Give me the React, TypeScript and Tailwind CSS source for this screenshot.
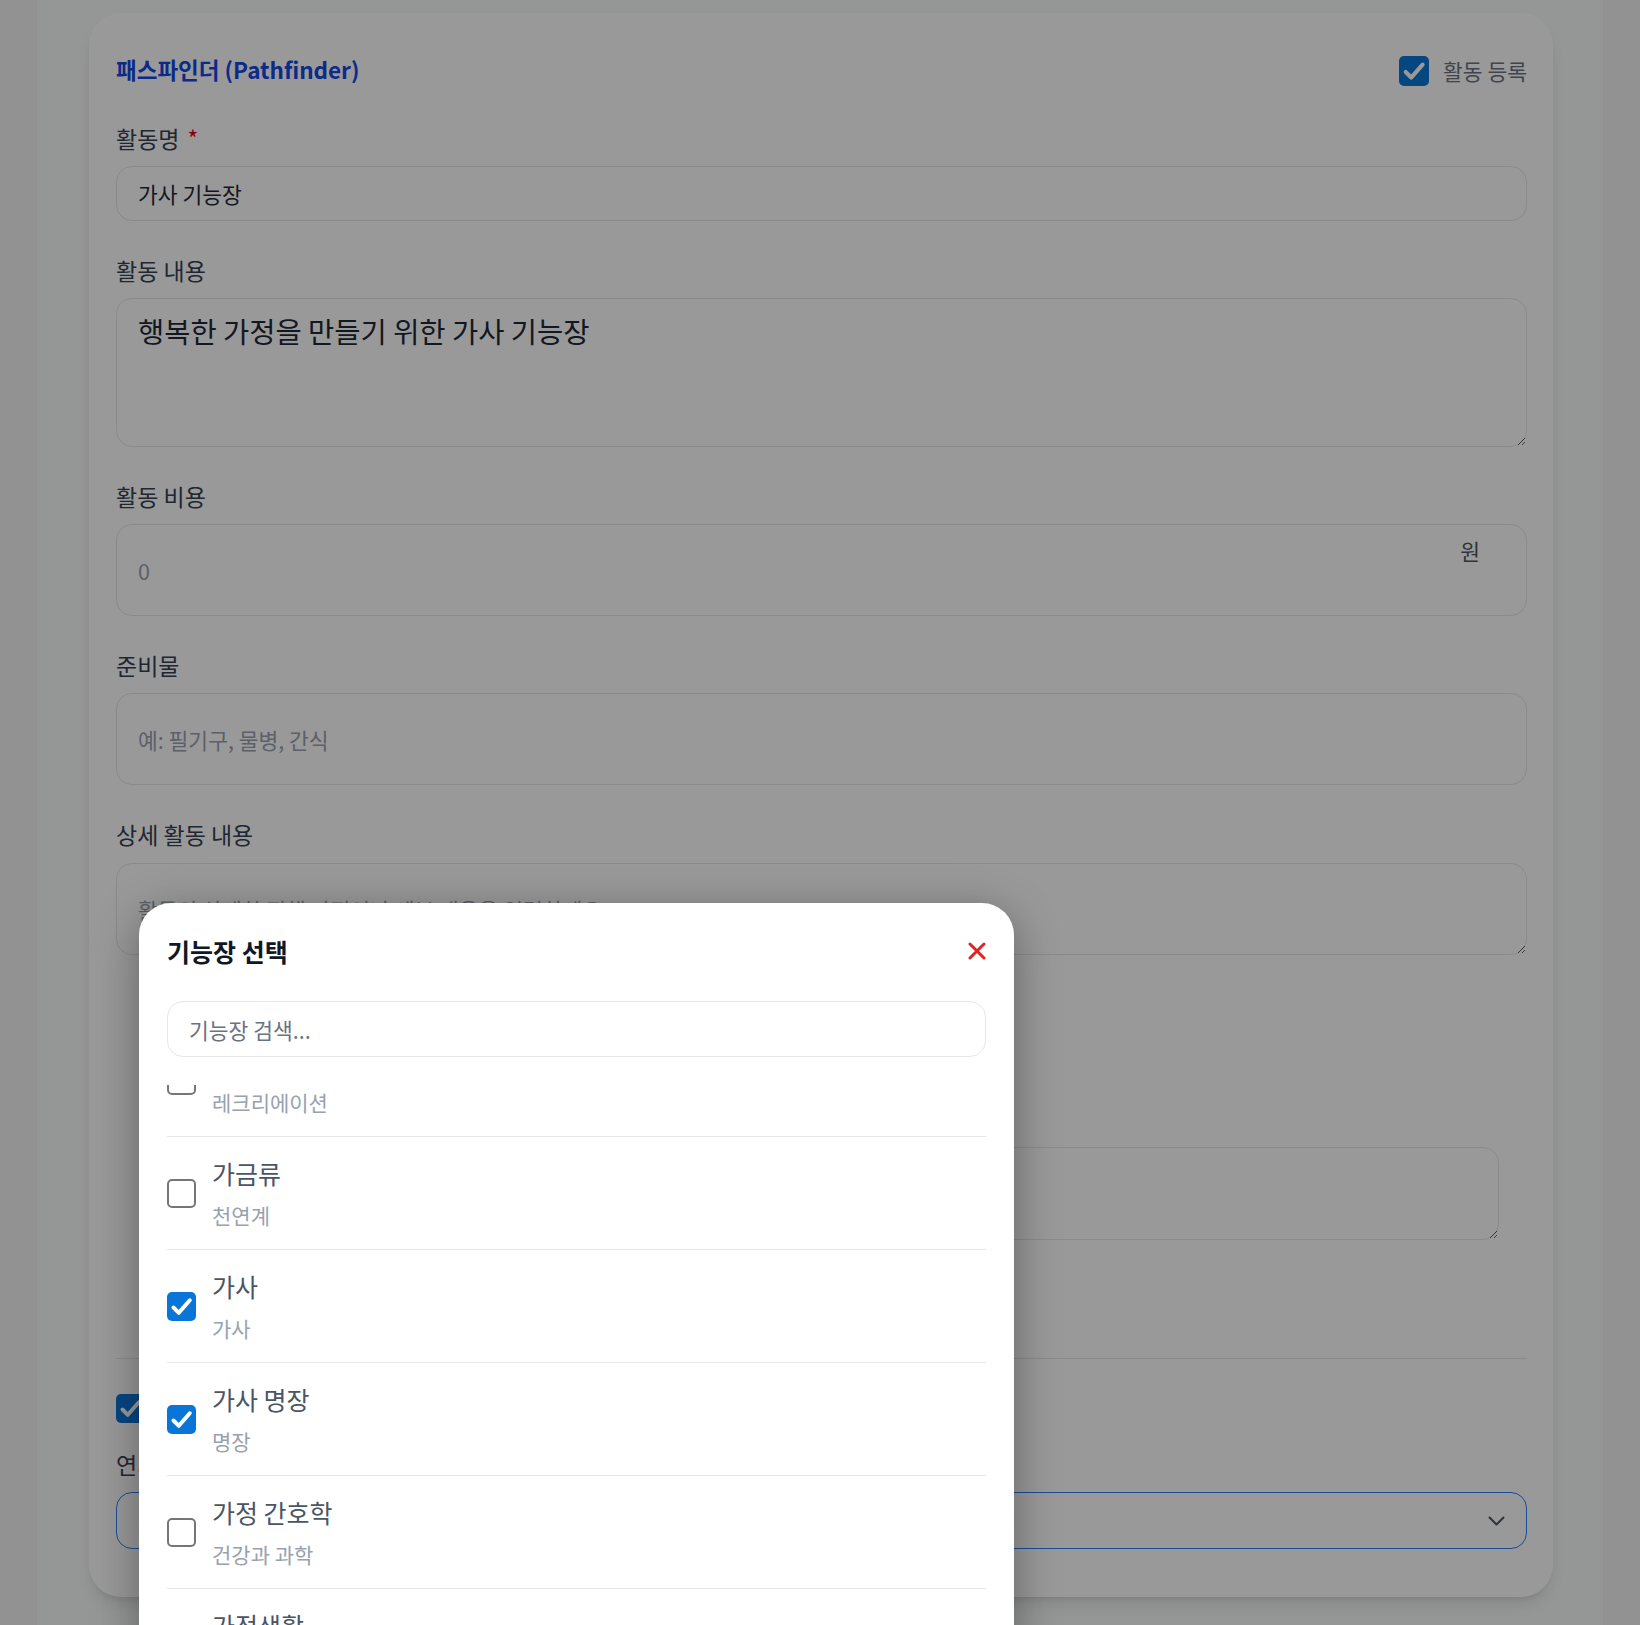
import React from "react";

const FONT = "font-['Noto_Sans_CJK_KR','Noto_Sans',sans-serif]";

const SKILLS = [
  { name: "가게 놀이", group: "레크리에이션", checked: false },
  { name: "가금류", group: "천연계", checked: false },
  { name: "가사", group: "가사", checked: true },
  { name: "가사 명장", group: "명장", checked: true },
  { name: "가정 간호학", group: "건강과 과학", checked: false },
  { name: "가정생활", group: "가사", checked: false },
  { name: "간호", group: "건강과 과학", checked: false },
];

// drawn like the browser's big checkbox: thick grey ring, or blue fill with a white tick
const CheckBox = ({ checked, size = 29 }: { checked?: boolean; size?: number }) => (
  <span
    className={`flex shrink-0 items-center justify-center rounded-[5px] ${
      checked ? "bg-[#0a75d8]" : "border-2 border-[#767676] bg-white"
    }`}
    style={{ width: size, height: size }}
  >
    {checked && (
      <svg width={size} height={size} viewBox="0 0 29 29" fill="none">
        <path d="M6.5 15.5L11.8 20.8L22.8 8.3" stroke="white" strokeWidth="4" strokeLinecap="round" strokeLinejoin="round" />
      </svg>
    )}
  </span>
);

const Label = ({ children, required }: { children: React.ReactNode; required?: boolean }) => (
  <label className="block text-[23px] leading-[30px] text-gray-700">
    {children}
    {required && <span className="ml-[8px] text-red-600">*</span>}
  </label>
);

const Field = ({ label, required, children }: { label: string; required?: boolean; children: React.ReactNode }) => (
  <div className="flex flex-col gap-[13px]">
    <Label required={required}>{label}</Label>
    {children}
  </div>
);

const inputBase =
  "block w-full rounded-2xl border border-gray-200 bg-white px-[21px] text-[21.5px] text-gray-800 outline-none placeholder:text-gray-400";

const SkillModal = () => (
  <div className="absolute left-[139px] top-[903px] flex h-[800px] w-[875px] flex-col rounded-t-[32px] bg-white px-[28px] pt-[32px] shadow-[0_10px_45px_rgba(0,0,0,0.35)]">
    <div className="flex h-[32px] items-center justify-between">
      <h2 className="text-[25px] font-bold leading-[32px] text-gray-900">기능장 선택</h2>
      <button aria-label="닫기" className="flex h-[18px] w-[18px] items-center justify-center">
        <svg width="18" height="18" viewBox="0 0 18 18" fill="none">
          <path d="M2 2L16 16M16 2L2 16" stroke="#dc2626" strokeWidth="3" strokeLinecap="round" />
        </svg>
      </button>
    </div>

    <input
      type="text"
      placeholder="기능장 검색..."
      className="mt-[34px] block h-[56px] w-full rounded-2xl border border-gray-200 px-[21px] text-[21.5px] text-gray-800 outline-none placeholder:text-gray-500"
    />

    <div className="mt-[28px] flex-1 overflow-hidden">
      <div className="-mt-[61px]">
        {SKILLS.map((s) => (
          <label key={s.name} className="flex h-[113px] items-center gap-[16px] border-b border-gray-200">
            <CheckBox checked={s.checked} />
            <div className="flex flex-col">
              <span className="text-[25px] leading-[34px] text-gray-600">{s.name}</span>
              <span className="mt-[10px] text-[21px] leading-[30px] text-gray-400">{s.group}</span>
            </div>
          </label>
        ))}
      </div>
    </div>
  </div>
);

export default function App() {
  return (
    <div className={`relative h-[1625px] overflow-hidden bg-gray-100 ${FONT}`}>
      <div className="mx-[37px] h-full bg-gray-50 pt-[13px]">
        <div className="ml-[52px] w-[1464px] rounded-[32px] bg-white pb-[48px] pl-[27px] pr-[26px] pt-[43px] shadow-lg">
          <div className="flex h-[30px] items-center justify-between">
            <h1 className="pb-[4px] text-[22.5px] font-bold leading-[30px] text-blue-700">패스파인더 (Pathfinder)</h1>
            <label className="flex items-center gap-[14px]">
              <CheckBox checked size={30} />
              <span className="text-[21.5px] leading-[30px] text-gray-500">활동 등록</span>
            </label>
          </div>

          <div className="mt-[37px] flex flex-col gap-[34px]">
            <Field label="활동명" required>
              <input type="text" defaultValue="가사 기능장" className={`${inputBase} h-[55px]`} />
            </Field>

            <Field label="활동 내용">
              <textarea
                defaultValue="행복한 가정을 만들기 위한 가사 기능장"
                className={`${inputBase} h-[149px] pt-[12px] text-[28.5px] leading-[39px]`}
              />
            </Field>

            <Field label="활동 비용">
              <div className="relative">
                <input type="text" placeholder="0" className={`${inputBase} h-[92px]`} />
                <span className="absolute right-[47px] top-[12px] text-[21.5px] leading-[30px] text-gray-600">원</span>
              </div>
            </Field>

            <Field label="준비물">
              <input type="text" placeholder="예: 필기구, 물병, 간식" className={`${inputBase} h-[92px]`} />
            </Field>

            <Field label="상세 활동 내용">
              <textarea
                placeholder="활동의 상세한 진행 과정이나 세부 내용을 입력하세요"
                className={`${inputBase} mt-px h-[92px] pt-[32px] leading-[28px]`}
              />
            </Field>

            <div className="px-[28px]">
              <Label>선택된 기능장</Label>
              <div className="mt-[13px] flex h-[40px] items-center gap-2">
                <span className="rounded-full bg-blue-50 px-4 py-1 text-[18px] text-blue-700">가사</span>
                <span className="rounded-full bg-blue-50 px-4 py-1 text-[18px] text-blue-700">가사 명장</span>
              </div>
              <div className="mt-[20px]">
                <Label>기능장 활동 메모</Label>
              </div>
              <textarea
                placeholder="기능장 관련 메모를 입력하세요"
                className={`${inputBase} mt-[25px] h-[93px] pt-[32px] leading-[28px]`}
              />
            </div>

            <div className="mt-[84px] h-px bg-gray-200" />

            <label className="flex h-[30px] items-center gap-[12px]">
              <CheckBox checked />
              <span className="text-[21.5px] leading-[30px] text-gray-700">다른 활동과 연계</span>
            </label>

            <div className="-mt-[8px]">
              <Field label="연계 기능장">
                <div className="relative">
                  <select className="block h-[57px] w-full appearance-none rounded-2xl border border-blue-500 bg-white px-[21px] text-[21.5px] text-gray-700 outline-none">
                    <option>선택하세요</option>
                  </select>
                  <svg
                    className="pointer-events-none absolute right-[22px] top-1/2 -translate-y-1/2"
                    width="17"
                    height="10"
                    viewBox="0 0 17 10"
                    fill="none"
                  >
                    <path d="M1.5 1.5L8.5 8.5L15.5 1.5" stroke="#4b5563" strokeWidth="2" strokeLinecap="round" strokeLinejoin="round" />
                  </svg>
                </div>
              </Field>
            </div>
          </div>
        </div>
      </div>

      <div className="absolute inset-0 bg-black/40" />
      <SkillModal />
    </div>
  );
}
